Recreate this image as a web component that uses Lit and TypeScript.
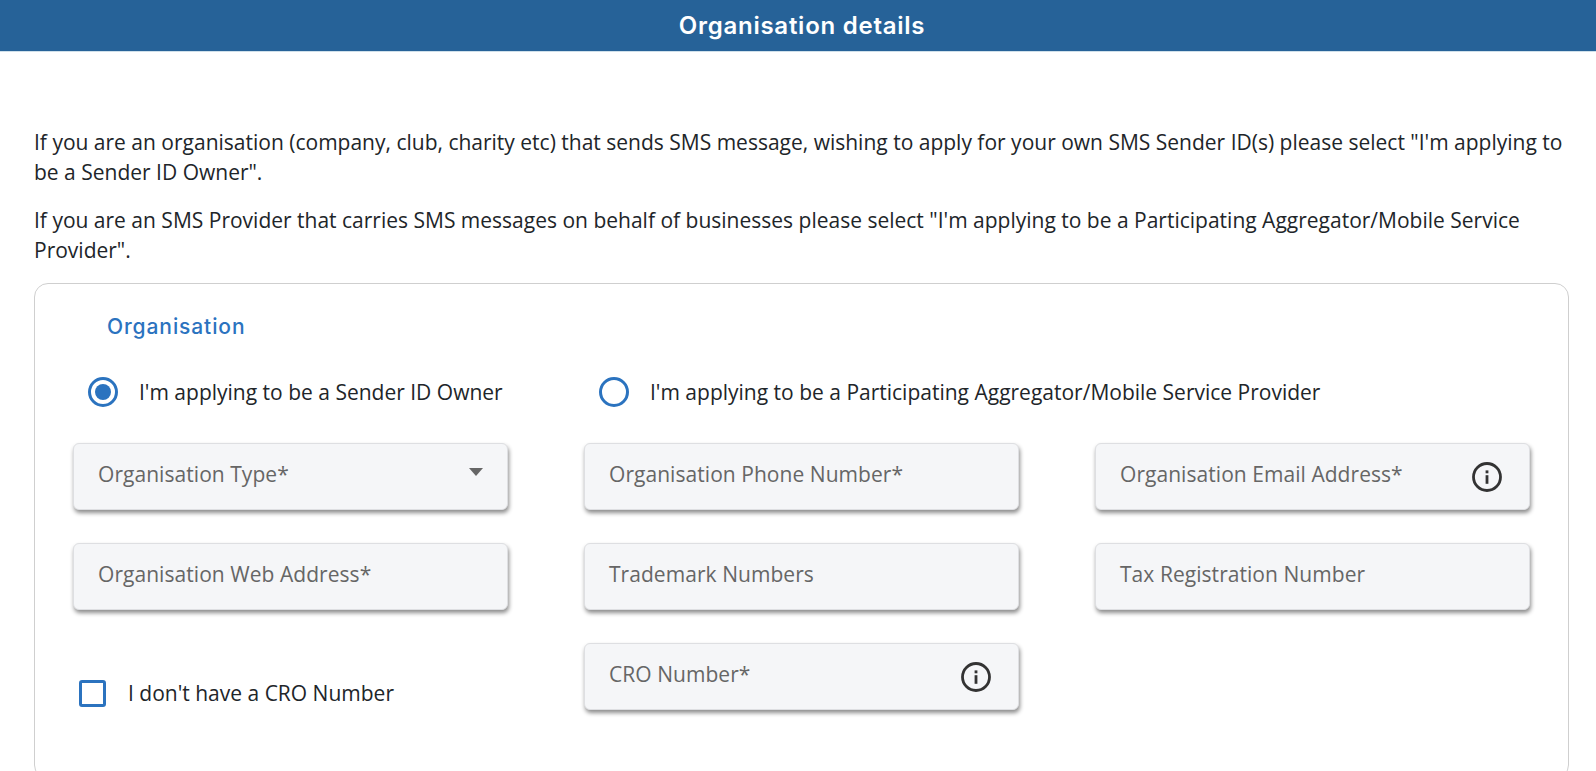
import { LitElement, html, css, svg } from "lit";
import { customElement } from "lit/decorators.js";

const infoIcon = html`<svg class="info" viewBox="0 0 30 30" width="30" height="30" aria-hidden="true">
  ${svg`<circle cx="15" cy="15" r="13.5" fill="none" stroke="#333" stroke-width="2.8"></circle>
  <rect x="13.6" y="13.2" width="2.8" height="8.6" fill="#333"></rect>
  <rect x="13.6" y="8.4" width="2.8" height="2.9" fill="#333"></rect>`}
</svg>`;

@customElement("app-root")
export class AppRoot extends LitElement {
  static styles = css`
    :host {
      display: block;
      height: 100vh;
      overflow: hidden;
      background: #fff;
      font-family: "Open Sans", sans-serif;
      color: #212529;
      font-size: 21px;
      line-height: 30px;
    }
    .bar {
      height: 51px;
      background: #266298;
      border-bottom: 1px solid #cfe0ea;
      display: flex;
      align-items: center;
      justify-content: center;
      color: #fff;
      font-family: Inter, sans-serif;
      font-weight: 600;
      font-size: 24px;
      letter-spacing: 0.75px;
      padding-left: 8px;
    }
    main {
      padding: 75px 27px 0 34px;
    }
    p {
      margin: 0 0 18px;
    }
    .card {
      border: 1px solid #cfcfcf;
      border-radius: 14px;
      padding: 31px 36px 68px 38px;
    }
    .legend {
      margin: 0 0 38px 34px;
      line-height: 24px;
      font-family: Inter, sans-serif;
      font-weight: 500;
      font-size: 21px;
      letter-spacing: 0.9px;
      color: #2b73bf;
    }
    .grid {
      display: grid;
      grid-template-columns: repeat(3, 435px);
      column-gap: 76px;
    }
    .radios {
      margin-bottom: 36px;
    }
    .opt {
      display: flex;
      align-items: center;
      height: 30px;
      padding-left: 15px;
      white-space: nowrap;
    }
    .opt.wide {
      grid-column: span 2;
    }
    .radio {
      box-sizing: border-box;
      width: 30px;
      height: 30px;
      border: 3px solid #2b73bf;
      border-radius: 50%;
      margin-right: 21px;
      display: flex;
      align-items: center;
      justify-content: center;
      flex: none;
    }
    .dot {
      width: 16px;
      height: 16px;
      border-radius: 50%;
      background: #2b73bf;
    }
    .fields {
      row-gap: 33px;
    }
    .field {
      box-sizing: border-box;
      height: 67px;
      background: #f5f6f8;
      border: 1px solid #dedfe2;
      border-radius: 6px;
      box-shadow: 1px 3px 4px rgba(0, 0, 0, 0.45);
      display: flex;
      align-items: flex-start;
      justify-content: space-between;
      padding: 15px 27px 0 24px;
      color: #666;
      letter-spacing: 0.05px;
    }
    .info {
      flex: none;
      margin: 3px 0 0 0;
      display: block;
    }
    .arrow {
      width: 0;
      height: 0;
      border-left: 7.5px solid transparent;
      border-right: 7.5px solid transparent;
      border-top: 8px solid #666;
      margin: 9px -3px 0 0;
    }
    .check {
      align-self: end;
      display: flex;
      align-items: center;
      margin: 0 0 3px 6px;
      height: 27px;
    }
    .check-text {
      padding-bottom: 2px;
    }
    .box {
      box-sizing: border-box;
      width: 27px;
      height: 27px;
      border: 3px solid #2b73bf;
      border-radius: 3px;
      margin-right: 22px;
      flex: none;
    }
  `;

  private field(label: string, kind: "" | "info" | "select" = "") {
    return html`<div class="field">
      <span>${label}</span>
      ${kind === "info" ? infoIcon : ""}
      ${kind === "select" ? html`<span class="arrow"></span>` : ""}
    </div>`;
  }

  render() {
    return html`
      <div class="bar">Organisation details</div>
      <main>
        <p>If you are an organisation (company, club, charity etc) that sends SMS message, wishing to apply for your own SMS Sender ID(s) please select "I'm applying to be a Sender ID Owner".</p>
        <p>If you are an SMS Provider that carries SMS messages on behalf of businesses please select "I'm applying to be a Participating Aggregator/Mobile Service Provider".</p>
        <section class="card">
          <div class="legend">Organisation</div>
          <div class="grid radios">
            <label class="opt"><span class="radio"><span class="dot"></span></span>I'm applying to be a Sender ID Owner</label>
            <label class="opt wide"><span class="radio"></span>I'm applying to be a Participating Aggregator/Mobile Service Provider</label>
          </div>
          <div class="grid fields">
            ${this.field("Organisation Type*", "select")}
            ${this.field("Organisation Phone Number*")}
            ${this.field("Organisation Email Address*", "info")}
            ${this.field("Organisation Web Address*")}
            ${this.field("Trademark Numbers")}
            ${this.field("Tax Registration Number")}
            <label class="check"><span class="box"></span><span class="check-text">I don't have a CRO Number</span></label>
            ${this.field("CRO Number*", "info")}
          </div>
        </section>
      </main>
    `;
  }
}
